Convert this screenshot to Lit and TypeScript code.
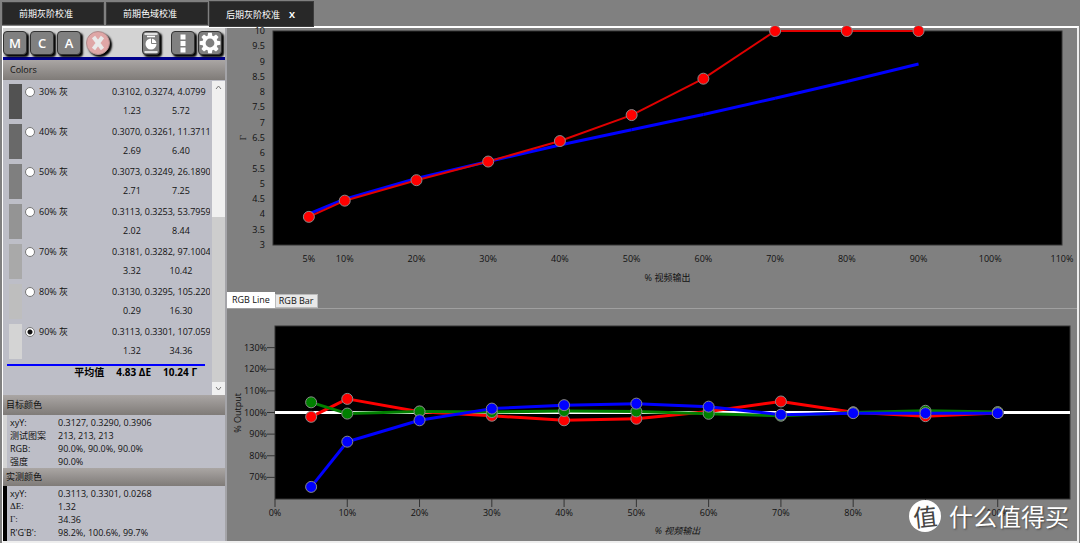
import { LitElement, html, svg, css } from "lit";
import { customElement, property, state } from "lit/decorators.js";

type Point = [number, number];

interface Series {
  color: string;
  width: number;
  points: Point[];
  markers: boolean;
}

const TARGET_GAMMA: Point[] = [
  [5, 4.02], [10, 4.5], [20, 5.18], [30, 5.73], [40, 6.27],
  [50, 6.77], [60, 7.27], [70, 7.8], [80, 8.35], [90, 8.92],
];
const MEASURED_GAMMA: Point[] = [
  [5, 3.92], [10, 4.45], [20, 5.12], [30, 5.73], [40, 6.4],
  [50, 7.25], [60, 8.44], [70, 10], [80, 10], [90, 10],
];
const LEVELS = [5, 10, 20, 30, 40, 50, 60, 70, 80, 90, 100];
const atLevels = (values: number[]): Point[] => values.map((v, i) => [LEVELS[i], v]);
const RED = atLevels([98, 106.3, 100.3, 98.5, 96.4, 97.1, 100.5, 105.1, 100.1, 98.3, 99.8]);
const GREEN = atLevels([104.7, 99.5, 100.5, 100.2, 100.7, 100.5, 99.4, 98.5, 100, 100.8, 100.2]);
const BLUE = atLevels([65.6, 86.5, 96.4, 101.8, 103.4, 104.1, 102.7, 99, 99.7, 99.7, 99.7]);

@customElement("line-chart")
class LineChart extends LitElement {
  @property({ attribute: false }) xTicks: number[] = [];
  @property({ attribute: false }) yTicks: number[] = [];
  @property({ attribute: false }) series: Series[] = [];
  @property({ type: Number }) yMin = 0;
  @property({ type: Number }) yMax = 100;
  @property({ type: Boolean }) ticks = false;
  @property() unit = "";
  @property() label = "";

  static styles = css`
    :host { display: flex; min-width: 0; min-height: 0; }
    svg { flex: 1; width: 100%; height: 100%; overflow: visible; }
    text { font: 9px "Open Sans", "Noto Sans CJK SC", sans-serif; fill: #111; }
    .end { text-anchor: end; }
    .mid { text-anchor: middle; }
    .tick { stroke: #333; stroke-width: 1; }
    .area { fill: #000; stroke: #333; stroke-width: 1; }
    .mark { stroke: #888; stroke-width: 1; }
  `;

  private x(v: number) { return `${(v / 110) * 100}%`; }
  private y(v: number) { return `${((this.yMax - v) / (this.yMax - this.yMin)) * 100}%`; }

  private drawSeries(s: Series) {
    return svg`
      ${s.points.slice(1).map((p, i) => svg`<line stroke=${s.color} stroke-width=${s.width}
        x1=${this.x(s.points[i][0])} y1=${this.y(s.points[i][1])} x2=${this.x(p[0])} y2=${this.y(p[1])}></line>`)}
      ${s.markers ? s.points.map((p) => svg`<circle class="mark" fill=${s.color} r="5.5"
        cx=${this.x(p[0])} cy=${this.y(p[1])}></circle>`) : ""}`;
  }

  render() {
    return html`<svg role="img" aria-label=${this.label}>
      <rect class="area" width="100%" height="100%"></rect>
      ${this.yTicks.map((v) => svg`
        ${this.ticks ? svg`<line class="tick" x1="-8" x2="0" y1=${this.y(v)} y2=${this.y(v)}></line>` : ""}
        <text class="end" x="-8" dy="3" y=${this.y(v)}>${v}${this.unit}</text>`)}
      ${this.xTicks.map((v) => svg`
        <svg x=${this.x(v)} y="100%" overflow="visible">
          ${this.ticks ? svg`<line class="tick" x1="0" x2="0" y1="0" y2="8"></line>` : ""}
          <text class="mid" x="0" y="17">${v}%</text>
        </svg>`)}
      ${this.series.map((s) => this.drawSeries(s))}
    </svg>`;
  }
}

const PATCHES = [
  { level: 30, color: "#525252", xyY: "0.3102, 0.3274, 4.0799", de: "1.23", gamma: "5.72" },
  { level: 40, color: "#696969", xyY: "0.3070, 0.3261, 11.3711", de: "2.69", gamma: "6.40" },
  { level: 50, color: "#7f7f7f", xyY: "0.3073, 0.3249, 26.1890", de: "2.71", gamma: "7.25" },
  { level: 60, color: "#949494", xyY: "0.3113, 0.3253, 53.7959", de: "2.02", gamma: "8.44" },
  { level: 70, color: "#a9a9a9", xyY: "0.3181, 0.3282, 97.1004", de: "3.32", gamma: "10.42" },
  { level: 80, color: "#bebebe", xyY: "0.3130, 0.3295, 105.220", de: "0.29", gamma: "16.30" },
  { level: 90, color: "#d4d4d4", xyY: "0.3113, 0.3301, 107.059", de: "1.32", gamma: "34.36" },
];

@customElement("app-root")
class AppRoot extends LitElement {
  @state() private level = 90;
  @state() private view = "line";

  static styles = css`
    :host {
      display: flex; flex-direction: column; box-sizing: border-box;
      min-height: 100vh; padding: 1px 1px 1px 2px; background: #808080; color: #111;
      font: 9px/13px "Open Sans", "Noto Sans CJK SC", sans-serif;
    }
    * { box-sizing: border-box; }
    button { font: inherit; color: inherit; padding: 0; border: 0; margin: 0; }
    .tabs { display: flex; align-items: flex-start; gap: 2px; height: 25px; }
    .tab {
      height: 23px; width: 102px; margin-top: 1px; padding: 0 16px; text-align: left;
      background: #282828; color: #fff; border: 1px solid #3c3c3c; white-space: nowrap;
    }
    .tab.on { width: 105px; height: 26px; margin: 0 0 0 -1px; z-index: 1; }
    .close { font-weight: 700; margin-left: 9px; }
    .frame { flex: 1; display: flex; border: 2px solid #fff; border-width: 2px 2px 2px 1px; border-color: #fff #eee #eee #fff; }
    .side { width: 224px; flex: none; display: flex; flex-direction: column; background: #bdbec7; border-right: 2px solid #a4a4a8; }
    .bar { display: flex; align-items: flex-start; gap: 3px; height: 32px; padding: 3px 3px 0 0; background: #d3d3d3; border-bottom: 3px solid #00008b; }
    .tool {
      flex: none; width: 24px; height: 24px; display: grid; place-items: center;
      background: #808080; color: #fff; border: 1px solid #333; border-radius: 4px;
      box-shadow: 2px 2px 2px #000; font-size: 13px; font-weight: 600;
    }
    .tool svg { display: block; }
    .doc { width: 18px; margin-left: auto; margin-right: 8px; }
    .stop { border-radius: 50%; background: #dfa6a6; border-color: #b08c8c; margin-left: 2px; }
    .head {
      height: 20px; padding-left: 3px; line-height: 20px; font-weight: 400; font-size: 9px; margin: 0;
      background: linear-gradient(#aaa6a4, #7f7b78);
    }
    .head.first { padding-left: 7px; }
    .info + .head { height: 18px; line-height: 18px; }
    .list { flex: 1; display: flex; }
    .rows { flex: 1; min-width: 0; padding: 4px 7px 0 4px; }
    .row { display: grid; grid-template-columns: 13px 90px 1fr; height: 40px; padding-left: 2px; }
    .swatch { height: 35px; }
    .pick { display: flex; align-items: center; gap: 4px; height: 15px; padding-left: 3px; }
    .pick input {
      appearance: none; width: 10px; height: 10px; margin: 0; border: 1px solid #777;
      border-radius: 50%; background: #fff;
    }
    .pick input:checked { background: radial-gradient(circle, #111 0 2px, #fff 3px); }
    .vals { display: grid; grid-template-columns: 40px 48px; column-gap: 5px; grid-template-rows: 15px 22px; align-items: center; text-align: center; }
    .xyy { grid-column: 1 / 3; width: 98px; text-align: left; white-space: nowrap; overflow: hidden; }
    .avg { display: flex; justify-content: flex-end; gap: 12px; border-top: 2px solid #00f; padding-right: 8px; font-size: 10px; font-weight: 700; color: #000; }
    .scroll { width: 13px; margin-top: 1px; display: flex; flex-direction: column; background: #cdcdcd; }
    .scroll button { height: 13px; background: #f0f0f0; display: grid; place-items: center; }
    .thumb { height: 123px; background: #f0f0f0; }
    .fill { flex: 1; }
    .info { display: grid; grid-template-columns: 48px 1fr; margin: 0; padding: 1px 0 0 3px; border-left: 4px solid #d4d4d4; line-height: 13px; }
    .info.dark { border-color: #000; padding-bottom: 2px; }
    .info dt, .info dd { margin: 0; }
    .serif { font-family: "Liberation Serif", serif; }
    .main { flex: 1; min-width: 0; display: flex; flex-direction: column; }
    .panel { display: grid; grid-template-columns: 46px 1fr; grid-template-rows: 1fr auto; }
    .gamma { flex: 264 1 264px; padding: 3px 15px 8px 0; }
    .rgb { flex: 233 1 233px; padding: 17px 7px 4px 0; grid-template-columns: 48px 1fr; border-top: 1px solid #a0a0a0; }
    .ylab { writing-mode: vertical-rl; transform: rotate(180deg); justify-self: start; align-self: center; line-height: 13px; }
    .gamma .ylab { margin-left: 10px; }
    .rgb .ylab { margin-left: 4px; }
    .xlab { grid-column: 2; text-align: center; padding-top: 26px; }
    .rgb .xlab { font-style: italic; padding: 25px 0 0 10px; }
    .views { display: flex; align-items: flex-end; height: 16px; }
    .views button { height: 14px; padding: 0 3px; background: #e8e8e8; border: 1px solid #bbb; line-height: 12px; }
    .views .on { height: 16px; padding: 0 4px; background: #fff; border-color: #fff; }
    .mark {
      position: absolute; right: 11px; bottom: 10px; display: flex; align-items: center; gap: 8px;
      color: #fff; font: 24px/34px "Noto Sans CJK SC", sans-serif; text-shadow: 1px 1px 2px #444;
    }
    .disc {
      width: 32px; height: 32px; border-radius: 50%; background: #fff; color: #444; text-shadow: none;
      font-size: 24px; line-height: 31px; text-align: center;
    }
    .disc i { display: block; transform: rotate(-6deg); font-style: normal; }
  `;

  private info(rows: [string, string, boolean?][], dark = false) {
    return html`<dl class="info ${dark ? "dark" : ""}">
      ${rows.map(([k, v, serif]) => html`<dt class=${serif ? "serif" : ""}>${k}</dt><dd>${v}</dd>`)}
    </dl>`;
  }

  private toolbar() {
    return html`<div class="bar">
      <button class="tool">M</button><button class="tool">C</button><button class="tool">A</button>
      <button class="tool stop" aria-label="Stop"><svg width="16" height="16" viewBox="0 0 16 16"><path d="M3.500 2L12.500 14M12.500 2L3.500 14" stroke="#e9e9e9" stroke-width="4"/></svg></button>
      <button class="tool doc" aria-label="Report"><svg width="16" height="22" viewBox="0 0 16 22">
        <path d="M1.500 2H14.500M1.500 20H14.500" stroke="#fff" stroke-width="1.500"/>
        <path d="M4 4.500H12" stroke="#fff" stroke-width="1.500"/>
        <circle cx="8" cy="12" r="5.500" fill="#fff"/><path d="M8.500 6V11.500H14" fill="none" stroke="#808080" stroke-width="1"/></svg></button>
      <button class="tool" aria-label="More"><svg width="6" height="20" viewBox="0 0 6 20"><path d="M.5 1.500h5v5h-5zM.5 8h5v5h-5zM.5 14.500h5v5h-5z" fill="#fff"/></svg></button>
      <button class="tool" aria-label="Settings"><svg width="22" height="22" viewBox="-11 -11 22 22">
        ${[0, 45, 90, 135, 180, 225, 270, 315].map((a) => svg`<path d="M-2.600 -6L-1.800 -10.300H1.800L2.600 -6Z" fill="#fff" transform="rotate(${a})"></path>`)}
        <circle r="6" fill="none" stroke="#fff" stroke-width="3.200"/></svg></button>
    </div>`;
  }

  render() {
    return html`
      <nav class="tabs">
        <button class="tab">前期灰阶校准</button><button class="tab">前期色域校准</button>
        <button class="tab on">后期灰阶校准<span class="close">X</span></button>
      </nav>
      <div class="frame">
        <aside class="side">
          ${this.toolbar()}
          <h2 class="head first">Colors</h2>
          <div class="list">
            <div class="rows">
              ${PATCHES.map((p) => html`<div class="row">
                <div class="swatch" style="background:${p.color}"></div>
                <label class="pick"><input type="radio" name="level" .checked=${this.level === p.level}
                  @change=${() => (this.level = p.level)}>${p.level}% 灰</label>
                <div class="vals"><span class="xyy">${p.xyY}</span><span>${p.de}</span><span>${p.gamma}</span></div>
              </div>`)}
              <div class="avg"><span>平均值</span><span>4.83 ΔE</span><span>10.24 Γ</span></div>
            </div>
            <div class="scroll">
              <button aria-label="Scroll up"><svg width="7" height="5"><path d="M1 4L3.500 1L6 4" fill="none" stroke="#777"/></svg></button>
              <div class="thumb"></div><div class="fill"></div>
              <button aria-label="Scroll down"><svg width="7" height="5"><path d="M1 1L3.500 4L6 1" fill="none" stroke="#777"/></svg></button>
            </div>
          </div>
          <h2 class="head">目标颜色</h2>
          ${this.info([["xyY:", "0.3127, 0.3290, 0.3906"], ["测试图案", "213, 213, 213"], ["RGB:", "90.0%, 90.0%, 90.0%"], ["强度", "90.0%"]])}
          <h2 class="head">实测颜色</h2>
          ${this.info([["xyY:", "0.3113, 0.3301, 0.0268"], ["ΔE:", "1.32", true], ["Γ:", "34.36", true], ["R'G'B':", "98.2%, 100.6%, 99.7%"]], true)}
        </aside>
        <main class="main">
          <section class="panel gamma">
            <span class="ylab serif">Γ</span>
            <line-chart label="Gamma" .yMin=${3} .yMax=${10}
              .xTicks=${[...LEVELS, 110]}
              .yTicks=${Array.from({ length: 15 }, (_, i) => 3 + i / 2)}
              .series=${[
                { color: "#00f", width: 3, points: TARGET_GAMMA, markers: false },
                { color: "#e00000", width: 2, points: MEASURED_GAMMA, markers: false },
                { color: "#f00", width: 0, points: MEASURED_GAMMA, markers: true },
              ]}></line-chart>
            <span class="xlab">% 视频输出</span>
          </section>
          <div class="views" role="tablist">
            <button role="tab" class=${this.view === "line" ? "on" : ""} @click=${() => (this.view = "line")}>RGB Line</button>
            <button role="tab" class=${this.view === "bar" ? "on" : ""} @click=${() => (this.view = "bar")}>RGB Bar</button>
          </div>
          <section class="panel rgb">
            <span class="ylab">% Output</span>
            <line-chart label="RGB balance" ticks unit="%" .yMin=${60} .yMax=${140}
              .xTicks=${[0, ...LEVELS.slice(1)]}
              .yTicks=${[70, 80, 90, 100, 110, 120, 130]}
              .series=${[
                { color: "#fff", width: 3, points: [[0, 100], [110, 100]], markers: false },
                { color: "#f00", width: 3, points: RED, markers: true },
                { color: "#008000", width: 3, points: GREEN, markers: true },
                { color: "#00f", width: 3, points: BLUE, markers: true },
              ]}></line-chart>
            <span class="xlab">% 视频输出</span>
          </section>
        </main>
      </div>
      <div class="mark"><span class="disc"><i>值</i></span><span>什么值得买</span></div>
    `;
  }
}
